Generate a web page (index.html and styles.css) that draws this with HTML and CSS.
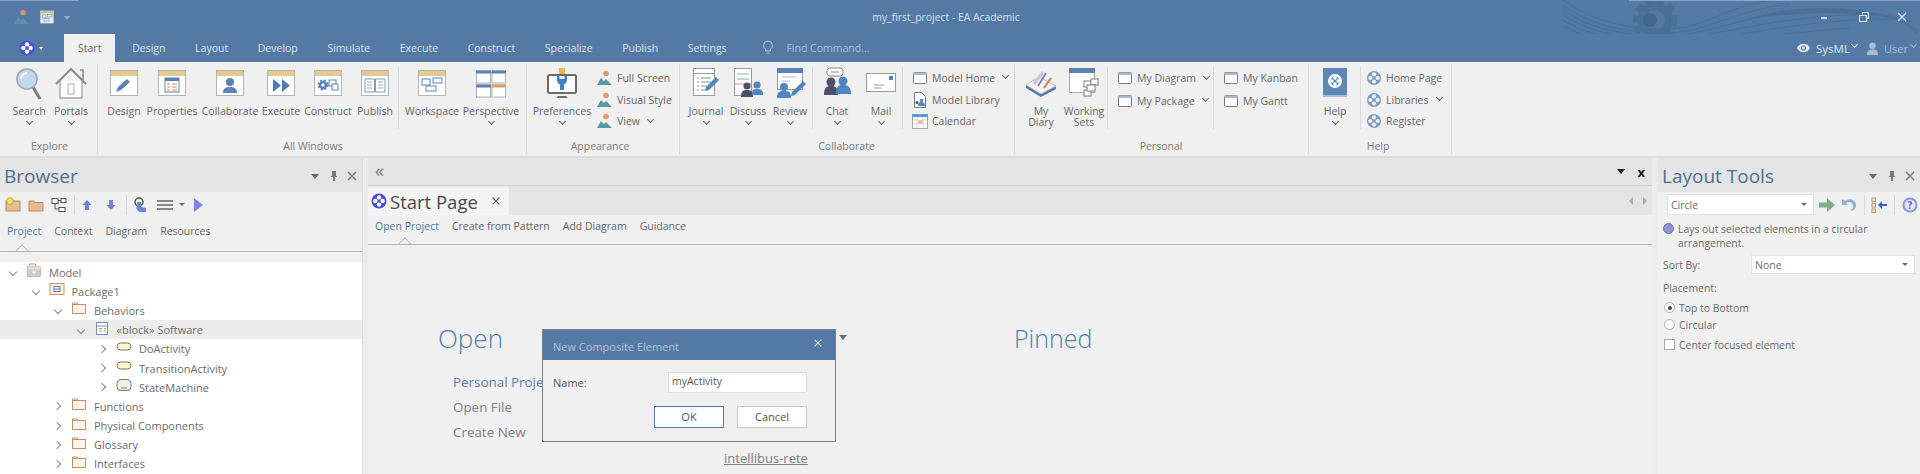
FILE: index.html
```html
<!DOCTYPE html>
<html>
<head>
  <meta name="viewport" content="width=device-width, initial-scale=1.0">
  <title>my_first_project - EA Academic</title>
  <link rel="stylesheet" href="styles.css">
</head>
<body>
  <svg class="sprite">
    <defs>
      <g id="win"><rect x="2.5" y="3.5" width="27" height="25" fill="#fff" stroke="#b4b4b4"/><rect x="3" y="4" width="26" height="5" fill="#e6c98f"/></g>
      <clipPath id="gear-clip"><path d="M60 0h70v24C110 30 85 30 60 24z"/></clipPath>
    </defs>
    <symbol id="i-logo" viewBox="0 0 16 16"><circle cx="8" cy="8" r="7.5" fill="#4b50d2"/><circle cx="8" cy="4.4" r="2.2" fill="#fff"/><circle cx="8" cy="11.6" r="2.2" fill="#fff"/><circle cx="4.4" cy="8" r="2.2" fill="#fff"/><circle cx="11.6" cy="8" r="2.2" fill="#fff"/><circle cx="8" cy="8" r="1.3" fill="#4b50d2"/></symbol>
    <symbol id="i-logo-g" viewBox="0 0 16 16"><circle cx="8" cy="8" r="7" fill="#7f9dbc"/><circle cx="8" cy="4.4" r="2.1" fill="#eef2f6"/><circle cx="8" cy="11.6" r="2.1" fill="#eef2f6"/><circle cx="4.4" cy="8" r="2.1" fill="#eef2f6"/><circle cx="11.6" cy="8" r="2.1" fill="#eef2f6"/><circle cx="8" cy="8" r="1.2" fill="#7f9dbc"/></symbol>
    <symbol id="i-search" viewBox="0 0 32 32"><path d="M20 20l7 12" stroke="#7d7d7d" stroke-width="3" stroke-linecap="round"/><circle cx="14" cy="12" r="10" fill="#c3d8ec" stroke="#a2a9b0" stroke-width="1.6"/><path d="M8 12a6 6 0 0 1 6-6" stroke="#fff" stroke-width="2" fill="none"/></symbol>
    <symbol id="i-home" viewBox="0 0 32 32"><path d="M5 14v17h22V14" fill="#fff" stroke="#a8a8a8" stroke-width="1.4"/><path d="M1 17L16 2l15 15" fill="none" stroke="#8c8c8c" stroke-width="2"/><path d="M25 3h3v10" fill="none" stroke="#8c8c8c" stroke-width="1.6"/><rect x="13" y="17" width="6" height="10" fill="#fff" stroke="#a8a8a8"/></symbol>
    <symbol id="i-w-design" viewBox="0 0 32 32"><use href="#win"/><path d="M8 25l2-5 9-8 3 3-9 8z" fill="#5a82b4"/></symbol>
    <symbol id="i-w-props" viewBox="0 0 32 32"><use href="#win"/><rect x="9" y="11" width="14" height="14" fill="#fff" stroke="#5a82b4"/><rect x="9" y="11" width="14" height="3" fill="#5a82b4"/><path d="M11 17h3M16 17h5M11 20h3M16 20h5M11 23h3M16 23h5" stroke="#d58a6a"/></symbol>
    <symbol id="i-w-collab" viewBox="0 0 32 32"><use href="#win"/><circle cx="16" cy="15" r="4" fill="#5a82b4"/><path d="M9 26c0-5 3-6 7-6s7 1 7 6z" fill="#5a82b4"/></symbol>
    <symbol id="i-w-exec" viewBox="0 0 32 32"><use href="#win"/><path d="M8 12l8 6.5-8 6.5zM17 12l8 6.5-8 6.5z" fill="#4f7cb2"/></symbol>
    <symbol id="i-w-cons" viewBox="0 0 32 32"><use href="#win"/><circle cx="11" cy="18" r="3" fill="#fff" stroke="#5a82b4" stroke-width="2.6"/><circle cx="11" cy="18" r="4.800" fill="none" stroke="#5a82b4" stroke-width="1.600" stroke-dasharray="2 1.800"/><rect x="17" y="13" width="7" height="6" fill="#fff" stroke="#5a82b4"/><rect x="20" y="17" width="6" height="6" fill="#fff" stroke="#5a82b4"/></symbol>
    <symbol id="i-w-pub" viewBox="0 0 32 32"><use href="#win"/><path d="M6 12h9.500v13H6zM16.500 12H26v13h-9.500z" fill="#fff" stroke="#7f9dbc"/><path d="M8 15h5M8 18h5M8 21h5M19 15h5M19 18h5M19 21h5" stroke="#9ab"/></symbol>
    <symbol id="i-w-space" viewBox="0 0 32 32"><use href="#win"/><g fill="#fff" stroke="#5a82b4"><rect x="6" y="12" width="8" height="6"/><rect x="17" y="11" width="9" height="5"/><rect x="10" y="19" width="10" height="5"/></g></symbol>
    <symbol id="i-persp" viewBox="0 0 32 32"><g fill="#fff" stroke="#b0b0b0"><rect x="1.500" y="4" width="14" height="12"/><rect x="17" y="4" width="13.500" height="12"/><rect x="1.500" y="18" width="14" height="12"/><rect x="17" y="18" width="13.500" height="12"/></g><rect x="1" y="3.500" width="15" height="3" fill="#5a82b4"/><rect x="16.500" y="3.500" width="14.500" height="3" fill="#5a82b4"/><rect x="1" y="17.500" width="15" height="3" fill="#5a82b4"/><rect x="16.500" y="17.500" width="14.500" height="3" fill="#d8a070"/></symbol>
    <symbol id="i-prefs" viewBox="0 0 32 32"><rect x="2" y="8" width="28" height="18" rx="1.500" fill="#fff" stroke="#6b6b6b" stroke-width="2"/><path d="M12 29h8l1.500 2h-11z" fill="#6b6b6b"/><path d="M13 1h6v6h-6z" fill="#e6b84f"/><path d="M11 8v5a5 5 0 0 0 3 4.500V23h4v-5.500a5 5 0 0 0 3-4.500V8l-2.500 0v4h-5V8z" fill="#3f7fc2"/></symbol>
    <symbol id="i-mini" viewBox="0 0 16 16"><circle cx="9" cy="3.500" r="2.800" fill="#e49a65"/><path d="M0 15l4-7 3 3 2-2 6 6z" fill="#5c97a6"/></symbol>
    <symbol id="i-journal" viewBox="0 0 32 32"><rect x="3.500" y="1.500" width="21" height="27" fill="#fff" stroke="#9a9a9a"/><path d="M4 6.500h20" stroke="#9a9a9a"/><path d="M7 11h2M11 11h10M7 15h2M11 15h10M7 19h2M11 19h6M7 23h2M11 23h4" stroke="#7c9c88"/><path d="M15 24l1-4 10-10 3 3-10 10z" fill="#4f86c0"/></symbol>
    <symbol id="i-discuss" viewBox="0 0 32 32"><rect x="2.500" y="1.500" width="17" height="27" fill="#fff" stroke="#9a9a9a"/><path d="M5 7h12M5 12h12" stroke="#79b7b7"/><path d="M3 17h16" stroke="#d8a0a0"/><circle cx="15" cy="19" r="3.600" fill="#4f4f68"/><path d="M9 30c0-6 2-7 6-7s6 1 6 7z" fill="#4f4f68"/><circle cx="25" cy="18" r="3.600" fill="#4f86c0"/><path d="M20 28c0-5 1-6 5-6s6 1 6 6z" fill="#4f86c0"/></symbol>
    <symbol id="i-review" viewBox="0 0 32 32"><rect x="3.500" y="2.500" width="25" height="20" fill="#fff" stroke="#9a9a9a"/><rect x="3" y="1" width="26" height="5" fill="#5a82b4"/><path d="M8 10h14M8 14h8" stroke="#b9b9b9"/><circle cx="10" cy="20" r="4" fill="#4f86c0"/><path d="M3 31c0-6 2-7 7-7s7 1 7 7z" fill="#4f86c0"/><path d="M17 29l1-4 11-11 3 3-11 11z" fill="#4f86c0"/></symbol>
    <symbol id="i-chat" viewBox="0 0 32 32"><rect x="6" y="1" width="16" height="8" rx="3" fill="#fff" stroke="#888"/><path d="M10 5h8" stroke="#888"/><circle cx="10" cy="15" r="4.500" fill="#4f4f68"/><path d="M3 28c0-8 3-9 7-9s7 1 7 9z" fill="#4f4f68"/><circle cx="22" cy="14" r="4.500" fill="#4f86c0"/><path d="M15 27c0-8 3-9 7-9s8 1 8 9z" fill="#4f86c0"/></symbol>
    <symbol id="i-mail" viewBox="0 0 32 32"><rect x="1.500" y="6.500" width="29" height="18" fill="#fff" stroke="#999"/><rect x="24" y="9" width="4" height="4" fill="#4f86c0"/><path d="M9 18h10M9 21h7" stroke="#999"/></symbol>
    <symbol id="i-swin" viewBox="0 0 16 16"><rect x="1.500" y="2.500" width="13" height="11" rx="1" fill="#fff" stroke="#7a7a7a"/><rect x="1.500" y="2.500" width="13" height="2.500" fill="#a9bdd2"/></symbol>
    <symbol id="i-lib" viewBox="0 0 16 16"><path d="M2.500.500h7l4 4v11h-11z" fill="#fff" stroke="#7a7a7a"/><circle cx="9.500" cy="8.500" r="1.800" fill="#4f86c0"/><path d="M6 14c0-3 1-4 3.500-4s3.500 1 3.500 4z" fill="#4f86c0"/><circle cx="5" cy="10.500" r="1.500" fill="#4f4f68"/></symbol>
    <symbol id="i-cal" viewBox="0 0 16 16"><rect x=".500" y="1.500" width="15" height="14" fill="#fff" stroke="#aaa"/><rect x="0" y="1" width="16" height="3" fill="#5b9bd5"/><rect x="6" y="7" width="5" height="4" fill="#f0bd80"/><path d="M1 7h14M1 11h14M5 4v11M11 4v11" stroke="#ddd"/></symbol>
    <symbol id="i-diary" viewBox="0 0 32 32"><path d="M1 18v3l15 9 15-8v-3l-15 8z" fill="#4f78a8"/><path d="M1 18L14 10l17 9-15 8z" fill="#f4f4f4" stroke="#a9a9a9" stroke-width=".8"/><path d="M9 17L18 5" stroke="#c9c9d9" stroke-width="3"/><path d="M13 19l8-13" stroke="#8e78c0" stroke-width="1.800"/><path d="M19 21l7-10" stroke="#d67a4a" stroke-width="2"/></symbol>
    <symbol id="i-sets" viewBox="0 0 32 32"><rect x="1.500" y="1.500" width="25" height="24" fill="#fff" stroke="#aaa"/><rect x="1" y="1" width="26" height="5" fill="#5a82b4"/><g fill="#fff" stroke="#7a7a7a"><rect x="16" y="14" width="7" height="6"/><rect x="23" y="12" width="7" height="6"/><rect x="16" y="23" width="7" height="6"/><rect x="19" y="18" width="8" height="6"/></g></symbol>
    <symbol id="i-book" viewBox="0 0 32 32"><rect x="4" y="1" width="24" height="29" fill="#5d87b8"/><rect x="4" y="28" width="24" height="2" fill="#a5bdd6"/><circle cx="16" cy="14" r="7" fill="#fff"/><circle cx="16" cy="14" r="4.500" fill="#5d87b8"/><circle cx="16" cy="11" r="1.700" fill="#fff"/><circle cx="16" cy="17" r="1.700" fill="#fff"/><circle cx="13" cy="14" r="1.700" fill="#fff"/><circle cx="19" cy="14" r="1.700" fill="#fff"/></symbol>
    <symbol id="i-pin" viewBox="0 0 12 12"><path d="M4 1h4v5h1v1H7v4H5V7H3V6h1z" fill="#7b7b7b"/></symbol>
    <symbol id="i-x" viewBox="0 0 12 12"><path d="M2 2l8 8M10 2l-8 8" stroke="currentColor" stroke-width="1.400"/></symbol>
    <symbol id="i-folder" viewBox="0 0 16 16"><path d="M1.500 3.500V2h5v1.500" fill="none" stroke="#c98f63"/><rect x="1.500" y="3.500" width="13" height="9" fill="#fff4e8" stroke="#c98f63"/></symbol>
    <symbol id="i-model" viewBox="0 0 16 16"><path d="M3.500 3V1h6v2" fill="none" stroke="#c98f63"/><rect x="1.500" y="3.500" width="13" height="10" fill="#bcd2e8" stroke="#c98f63" stroke-width=".6"/><rect x="1.500" y="3.500" width="13" height="3" fill="#f2dcc0"/><rect x="6.500" y="8" width="3" height="2" fill="#fff"/></symbol>
    <symbol id="i-pkg" viewBox="0 0 16 16"><rect x="1" y="1.500" width="14" height="11" fill="#fdf5ec" stroke="#c98f63"/><rect x="5" y="4.500" width="6" height="5" fill="#fff" stroke="#4f7cb2"/><path d="M5 7h6" stroke="#4f7cb2"/></symbol>
    <symbol id="i-block" viewBox="0 0 16 16"><rect x="2.500" y="1.500" width="11" height="12" fill="#fff" stroke="#7a8cc6"/><path d="M3 5h10" stroke="#7a8cc6"/><path d="M5 7.500h3M10 7.500h2M5 10h3M10 10h2" stroke="#d58a6a"/></symbol>
    <symbol id="i-act" viewBox="0 0 16 16"><rect x="1" y="3" width="14" height="7" rx="3.500" fill="#fff5c8" stroke="#777"/></symbol>
    <symbol id="i-state" viewBox="0 0 16 16"><rect x="1" y="1.500" width="14" height="11" rx="4" fill="#eef3e6" stroke="#777"/><path d="M5 10h6" stroke="#777"/></symbol>
  </svg>

  <div class="app">
    <div class="titlebar">
      <svg class="wave" viewBox="0 0 360 62">
        <g clip-path="url(#gear-clip)">
          <circle cx="95" cy="20" r="14" fill="none" stroke="#4a6f99" stroke-width="8"/>
          <circle cx="95" cy="20" r="20" fill="none" stroke="#4a6f99" stroke-width="5" stroke-dasharray="7 5"/>
          <circle cx="90" cy="20" r="7" fill="#436790"/>
        </g>
        <g fill="none" stroke="#4a6f99" stroke-width="1">
          <path d="M3 0C30 20 65 29 105 29S170 4 215 0"/>
          <path d="M3 5C30 25 65 33 105 33S175 10 230 4"/>
          <path d="M3 10C30 29 65 36 105 36S180 16 250 9"/>
          <path d="M3 15C30 33 65 39 105 39S190 22 270 16s70 8 87 14"/>
          <path d="M3 20C30 37 65 42 105 43S195 28 280 21s60 6 78 12"/>
          <path d="M4 26C30 41 65 46 110 46S200 34 290 28"/>
        </g>
        <path d="M190 18C230 6 290 2 357 23C300 10 250 12 190 18z" fill="#4a6f99"/>
        <rect x="69" y="0" width="291" height="1" fill="#8fa7c2"/>
      </svg>
      <div class="qat">
        <svg class="ic16"><use href="#i-mini"/></svg>
        <svg class="ic16"><use href="#i-w-space"/></svg>
        <span class="qat-drop"></span>
      </div>
      <div class="app-title">my_first_project - EA Academic</div>
      <div class="win-btns">
        <span class="win-min"></span>
        <svg class="win-rest" viewBox="0 0 10 10"><path d="M3.500 2.500V.5h6v6h-2M.5 3.500h7v6h-7z" fill="none" stroke="#d9e2ec" stroke-width="1.200"/></svg>
        <svg class="win-close"><use href="#i-x"/></svg>
      </div>
    </div>

    <div class="tabbar">
      <div class="app-menu"><svg class="ic16"><use href="#i-logo"/></svg><span class="drop-w"></span></div>
      <div class="tab active">Start</div>
      <div class="tab">Design</div>
      <div class="tab">Layout</div>
      <div class="tab">Develop</div>
      <div class="tab">Simulate</div>
      <div class="tab">Execute</div>
      <div class="tab">Construct</div>
      <div class="tab">Specialize</div>
      <div class="tab">Publish</div>
      <div class="tab">Settings</div>
      <svg class="bulb" viewBox="0 0 12 16"><path d="M6 1a4.500 4.500 0 0 0-2.500 8.200V11h5V9.200A4.500 4.500 0 0 0 6 1zM4.500 13h3" fill="none" stroke="#b7c7d9"/></svg>
      <div class="find">Find Command...</div>
      <div class="tab-right">
        <svg class="eye" viewBox="0 0 14 10"><path d="M0 5c3-6 11-6 14 0-3 6-11 6-14 0z" fill="#e8eef4"/><circle cx="7" cy="5" r="2.800" fill="#5579a5"/><circle cx="7" cy="5" r="1.500" fill="#e8eef4"/></svg>
        <span class="view-name">SysML</span><i class="chev-w"></i>
        <svg class="user-ic" viewBox="0 0 12 14"><circle cx="6" cy="4" r="3.500" fill="#a9bcd2"/><path d="M0 14c0-5 2-6 6-6s6 1 6 6z" fill="#a9bcd2"/></svg>
        <span class="user-name">User</span><i class="chev-w dim"></i>
      </div>
    </div>

    <div class="ribbon">
      <div class="grp g-explore">
        <div class="grp-body">
          <div class="big w42"><svg class="ic32"><use href="#i-search"/></svg><span>Search</span><i class="chev"></i></div>
          <div class="big w42"><svg class="ic32"><use href="#i-home"/></svg><span>Portals</span><i class="chev"></i></div>
        </div>
        <div class="grp-label">Explore</div>
      </div>
      <div class="grp g-windows">
        <div class="grp-body">
          <div class="big w48"><svg class="ic32"><use href="#i-w-design"/></svg><span>Design</span></div>
          <div class="big w48"><svg class="ic32"><use href="#i-w-props"/></svg><span>Properties</span></div>
          <div class="big w68"><svg class="ic32"><use href="#i-w-collab"/></svg><span>Collaborate</span></div>
          <div class="big w34"><svg class="ic32"><use href="#i-w-exec"/></svg><span>Execute</span></div>
          <div class="big w60"><svg class="ic32"><use href="#i-w-cons"/></svg><span>Construct</span></div>
          <div class="big w34"><svg class="ic32"><use href="#i-w-pub"/></svg><span>Publish</span></div>
          <div class="sep s6"></div>
          <div class="big w66"><svg class="ic32"><use href="#i-w-space"/></svg><span>Workspace</span></div>
          <div class="big w52"><svg class="ic32"><use href="#i-persp"/></svg><span>Perspective</span><i class="chev"></i></div>
        </div>
        <div class="grp-label">All Windows</div>
      </div>
      <div class="grp g-appear">
        <div class="grp-body">
          <div class="big w70"><svg class="ic32"><use href="#i-prefs"/></svg><span>Preferences</span><i class="chev"></i></div>
          <div class="small-col c-appear">
            <div class="small"><svg class="ic16"><use href="#i-mini"/></svg>Full Screen</div>
            <div class="small"><svg class="ic16"><use href="#i-mini"/></svg>Visual Style</div>
            <div class="small"><svg class="ic16"><use href="#i-mini"/></svg>View<i class="chev-s"></i></div>
          </div>
        </div>
        <div class="grp-label">Appearance</div>
      </div>
      <div class="grp g-collab">
        <div class="grp-body">
          <div class="big w42"><svg class="ic32"><use href="#i-journal"/></svg><span>Journal</span><i class="chev"></i></div>
          <div class="big w42"><svg class="ic32"><use href="#i-discuss"/></svg><span>Discuss</span><i class="chev"></i></div>
          <div class="big w42"><svg class="ic32"><use href="#i-review"/></svg><span>Review</span><i class="chev"></i></div>
          <div class="sep"></div>
          <div class="big w48"><svg class="ic32"><use href="#i-chat"/></svg><span>Chat</span><i class="chev"></i></div>
          <div class="big w40"><svg class="ic32"><use href="#i-mail"/></svg><span>Mail</span><i class="chev"></i></div>
          <div class="sep"></div>
          <div class="small-col">
            <div class="small"><svg class="ic16"><use href="#i-swin"/></svg>Model Home<i class="chev-s"></i></div>
            <div class="small"><svg class="ic16"><use href="#i-lib"/></svg>Model Library</div>
            <div class="small"><svg class="ic16"><use href="#i-cal"/></svg>Calendar</div>
          </div>
        </div>
        <div class="grp-label">Collaborate</div>
      </div>
      <div class="grp g-personal">
        <div class="grp-body">
          <div class="big w42 tight"><svg class="ic32"><use href="#i-diary"/></svg><span>My<br>Diary</span></div>
          <div class="big w44 tight"><svg class="ic32"><use href="#i-sets"/></svg><span>Working<br>Sets</span></div>
          <div class="sep"></div>
          <div class="small-col c-mydiag">
            <div class="small"><svg class="ic16"><use href="#i-swin"/></svg>My Diagram<i class="chev-s"></i></div>
            <div class="small"><svg class="ic16"><use href="#i-swin"/></svg>My Package<i class="chev-s"></i></div>
          </div>
          <div class="sep"></div>
          <div class="small-col">
            <div class="small"><svg class="ic16"><use href="#i-swin"/></svg>My Kanban</div>
            <div class="small"><svg class="ic16"><use href="#i-swin"/></svg>My Gantt</div>
          </div>
        </div>
        <div class="grp-label">Personal</div>
      </div>
      <div class="grp g-help">
        <div class="grp-body">
          <div class="big w48"><svg class="ic32"><use href="#i-book"/></svg><span>Help</span><i class="chev"></i></div>
          <div class="sep"></div>
          <div class="small-col c-help">
            <div class="small"><svg class="ic16"><use href="#i-logo-g"/></svg>Home Page</div>
            <div class="small"><svg class="ic16"><use href="#i-logo-g"/></svg>Libraries<i class="chev-s"></i></div>
            <div class="small"><svg class="ic16"><use href="#i-logo-g"/></svg>Register</div>
          </div>
        </div>
        <div class="grp-label">Help</div>
      </div>
    </div>

    <div class="workspace">
      <div class="panel browser">
        <div class="panel-head">
          <span class="panel-title">Browser</span>
          <span class="head-btns"><i class="tri"></i><svg class="ic12"><use href="#i-pin"/></svg><svg class="ic12 grey"><use href="#i-x"/></svg></span>
        </div>
        <div class="toolbar">
          <svg class="ic16" viewBox="0 0 16 16"><rect x="1" y="4" width="14" height="10" fill="#e6bd92" stroke="#b98a5c"/><circle cx="5" cy="4" r="3.400" fill="#f4e06a" stroke="#9c8a2c" stroke-width=".6"/></svg>
          <svg class="ic16" viewBox="0 0 16 16"><path d="M1 4h5l1 1.500h8V14H1z" fill="#e6bd92" stroke="#b98a5c"/></svg>
          <svg class="ic16" viewBox="0 0 16 16"><g fill="#fff" stroke="#555"><rect x="1" y="1.500" width="6" height="5"/><rect x="10" y="1.500" width="5" height="4"/><rect x="8" y="10.500" width="6" height="4"/></g><path d="M4 7v5h4M7 3.500h3" stroke="#555" fill="none"/></svg>
          <span class="tb-sep"></span>
          <svg class="ic16 gap-a" viewBox="0 0 16 16"><path d="M8 3l4.500 5H10v5H6V8H3.500z" fill="#6f82d8"/></svg>
          <svg class="ic16 gap-b" viewBox="0 0 16 16"><path d="M8 13l4.500-5H10V3H6v5H3.500z" fill="#6f82d8"/></svg>
          <span class="tb-sep"></span>
          <svg class="ic16 gap-c" viewBox="0 0 16 16"><circle cx="7" cy="5" r="4" fill="none" stroke="#555" stroke-width="1.500"/><path d="M5 5h4v5l5 1v4H7l-3-4 1-1z" fill="#6f82d8"/></svg>
          <svg class="ic16 gap-d" viewBox="0 0 16 16"><path d="M0 4h16M0 8h16M0 12h16" stroke="#666" stroke-width="1.500"/></svg>
          <i class="tri small-tri"></i>
          <svg class="ic16 gap-e" viewBox="0 0 16 16"><path d="M3 1l9 7-9 7z" fill="#7c86de"/></svg>
        </div>
        <div class="subtabs b-tabs">
          <span class="on">Project</span><span>Context</span><span>Diagram</span><span>Resources</span>
          <i class="notch n-browser"></i>
        </div>
        <div class="tree">
          <div class="row l0"><i class="tw down"></i><svg class="ic16"><use href="#i-model"/></svg>Model</div>
          <div class="row l1"><i class="tw down"></i><svg class="ic16"><use href="#i-pkg"/></svg>Package1</div>
          <div class="row l2"><i class="tw down"></i><svg class="ic16"><use href="#i-folder"/></svg>Behaviors</div>
          <div class="row l3 sel"><i class="tw down"></i><svg class="ic16"><use href="#i-block"/></svg>«block» Software</div>
          <div class="row l4"><i class="tw"></i><svg class="ic16"><use href="#i-act"/></svg>DoActivity</div>
          <div class="row l4"><i class="tw"></i><svg class="ic16"><use href="#i-act"/></svg>TransitionActivity</div>
          <div class="row l4"><i class="tw"></i><svg class="ic16"><use href="#i-state"/></svg>StateMachine</div>
          <div class="row l2"><i class="tw"></i><svg class="ic16"><use href="#i-folder"/></svg>Functions</div>
          <div class="row l2"><i class="tw"></i><svg class="ic16"><use href="#i-folder"/></svg>Physical Components</div>
          <div class="row l2"><i class="tw"></i><svg class="ic16"><use href="#i-folder"/></svg>Glossary</div>
          <div class="row l2"><i class="tw"></i><svg class="ic16"><use href="#i-folder"/></svg>Interfaces</div>
        </div>
      </div>

      <div class="panel doc">
        <div class="doc-top">
          <span class="dbl">«</span>
          <span class="doc-btns"><i class="tri dark"></i><b>x</b></span>
        </div>
        <div class="doc-tabs">
          <div class="doc-tab"><svg class="ic16"><use href="#i-logo"/></svg><span>Start Page</span><svg class="ic12 dk"><use href="#i-x"/></svg></div>
          <span class="nav-arrows"><i class="na left"></i><i class="na right"></i></span>
        </div>
        <div class="subtabs d-tabs">
          <span class="on">Open Project</span><span>Create from Pattern</span><span>Add Diagram</span><span>Guidance</span>
          <i class="notch n-doc"></i>
        </div>
        <div class="doc-body">
          <div class="col">
            <h2>Open</h2>
            <ul class="links">
              <li class="blue">Personal Proje</li>
              <li>Open File</li>
              <li>Create New</li>
            </ul>
          </div>
          <div class="col col-mid">
            <i class="tri recent-drop"></i>
            <a class="recent-link">intellibus-rete</a>
          </div>
          <div class="col">
            <h2 class="narrow">Pinned</h2>
          </div>
        </div>

        <div class="dialog">
          <div class="dlg-head"><span>New Composite Element</span><svg class="ic12"><use href="#i-x"/></svg></div>
          <div class="dlg-row"><label>Name:</label><div class="dlg-input">myActivity</div></div>
          <div class="dlg-btns"><div class="btn default">OK</div><div class="btn">Cancel</div></div>
        </div>
      </div>

      <div class="panel tools">
        <div class="panel-head">
          <span class="panel-title">Layout Tools</span>
          <span class="head-btns"><i class="tri"></i><svg class="ic12"><use href="#i-pin"/></svg><svg class="ic12 grey"><use href="#i-x"/></svg></span>
        </div>
        <div class="toolbar t-bar">
          <div class="select s-layout">Circle<i class="tri small-tri"></i></div>
          <svg class="ic16 t-go" viewBox="0 0 16 16"><path d="M0 5.500h8V1l8 7-8 7v-4.500H0z" fill="#7fb08c"/></svg>
          <svg class="ic16 t-undo" viewBox="0 0 16 16"><path d="M1 2v6h6L5 6c3-2 7-1 7 3 0 2-1 4-3 5 4 0 6-3 6-6 0-5-6-8-11-4z" fill="#8fb0dc"/></svg>
          <span class="tb-sep"></span>
          <svg class="ic16 t-align" viewBox="0 0 16 16"><g fill="#fff" stroke="#b98a5c"><rect x="1" y="1" width="3.500" height="3.500"/><rect x="1" y="6.500" width="3.500" height="3.500"/><rect x="1" y="12" width="3.500" height="3.500"/></g><path d="M16 7v2h-5v3L7 8l4-4v3z" fill="#3f5fc0"/></svg>
          <span class="tb-sep"></span>
          <svg class="ic16 t-help" viewBox="0 0 16 16"><circle cx="8" cy="8" r="7.500" fill="#8c93dc"/><circle cx="8" cy="8" r="5.500" fill="#e6e8f8"/><text x="8" y="11.500" text-anchor="middle" font-size="10" font-weight="700" font-family="Open Sans" fill="#5860c0">?</text></svg>
        </div>
        <div class="tool-body">
          <div class="desc"><i class="dot"></i><span>Lays out selected elements in a circular arrangement.</span></div>
          <div class="field"><label>Sort By:</label><div class="select s-sort">None<i class="tri small-tri"></i></div></div>
          <div class="place">Placement:</div>
          <div class="opt first"><i class="radio checked"></i>Top to Bottom</div>
          <div class="opt"><i class="radio"></i>Circular</div>
          <div class="opt chk"><i class="check"></i>Center focused element</div>
        </div>
      </div>
    </div>
  </div>
</body>
</html>
```

FILE: styles.css
```css
* {
  box-sizing: border-box;
}

html, body {
  margin: 0;
  padding: 0;
  height: 100%;
  overflow: hidden;
}

body {
  font-family: "Open Sans", "Noto Sans", sans-serif;
  font-size: 10.5px;
  color: #666666;
  background-color: #f0f0f0;
}

.sprite {
  display: none;
}

.ic12 { width: 12px; height: 12px; flex: none; }
.ic16 { width: 16px; height: 16px; flex: none; }
.ic32 { width: 32px; height: 32px; flex: none; }

.app {
  display: flex;
  flex-direction: column;
  height: 474px;
  width: 1920px;
}

/* title bar */
.titlebar {
  position: relative;
  height: 34px;
  background-color: #5579a5;
  display: flex;
  align-items: center;
  padding-left: 14px;
}

.titlebar::before {
  content: "";
  position: absolute;
  left: 0;
  top: 0;
  width: 78px;
  height: 1px;
  background-color: #8fa7c2;
}

.wave {
  position: absolute;
  left: 1560px;
  top: 0;
  width: 360px;
  height: 62px;
  overflow: visible;
}

.qat {
  display: flex;
  align-items: center;
  gap: 9px;
  width: 852px;
  opacity: 0.85;
}

.qat-drop {
  width: 0;
  height: 0;
  border: 3px solid transparent;
  border-top: 4px solid #9fb3c9;
  margin-top: 4px;
}

.app-title {
  font-size: 10.4px;
  color: #d9e2ec;
  width: 160px;
  text-align: center;
  position: relative;
}

.win-btns {
  position: absolute;
  right: 12px;
  top: 11px;
  display: flex;
  align-items: center;
}

.win-min {
  width: 6px;
  height: 2px;
  background-color: #d9e2ec;
  margin-right: 32px;
  margin-top: 2px;
}

.win-rest {
  width: 10px;
  height: 10px;
  margin-right: 27px;
}

.win-close {
  width: 12px;
  height: 12px;
  color: #d9e2ec;
}

/* ribbon tabs */
.tabbar {
  height: 28px;
  background-color: #5579a5;
  display: flex;
  align-items: center;
  position: relative;
}

.app-menu {
  width: 64px;
  padding-left: 19px;
  display: flex;
  align-items: center;
  gap: 4px;
}

.drop-w {
  width: 0;
  height: 0;
  border: 2.5px solid transparent;
  border-top: 3px solid #ffffff;
  margin-top: 2px;
}

.tab {
  height: 28px;
  line-height: 28px;
  padding: 0 14.8px;
  color: #dde5ee;
  font-size: 10.5px;
  white-space: nowrap;
}

.tab.active {
  background-color: #f0f0f0;
  color: #666666;
  padding: 0 14px;
  margin-right: 2px;
}

.bulb {
  width: 12px;
  height: 16px;
  margin-left: 21px;
}

.find {
  margin-left: 12px;
  color: #aebfd3;
  font-size: 10.5px;
}

.tab-right {
  position: absolute;
  right: 0;
  top: 0;
  left: 1797px;
  height: 28px;
  display: flex;
  align-items: center;
  color: #dde5ee;
  font-size: 11.5px;
}

.eye {
  width: 13px;
  height: 10px;
  margin-right: 6px;
}

.view-name {
  width: 34px;
}

.user-ic {
  width: 11px;
  height: 13px;
  margin-left: 10px;
  margin-right: 6px;
}

.user-name {
  width: 25px;
  color: #a9bcd2;
  font-size: 11px;
}

.chev-w {
  width: 5px;
  height: 5px;
  border-right: 1px solid #e8eef4;
  border-bottom: 1px solid #e8eef4;
  transform: rotate(45deg);
  margin-top: -8px;
  margin-left: 2px;
}

.chev-w.dim {
  border-color: #a9bcd2;
}

/* ribbon */
.ribbon {
  height: 96px;
  background-color: #f0f0f0;
  border-bottom: 2px solid #dcdcdc;
  display: flex;
}

.grp {
  display: flex;
  flex-direction: column;
  border-right: 1px solid #dadada;
  margin: 2px 0 2px;
  flex: none;
}

.g-explore  { width: 98px; padding-left: 8px; }
.g-windows  { width: 429px; padding-left: 2px; }
.g-appear   { width: 153px; }
.g-collab   { width: 335px; padding-left: 5px; }
.g-personal { width: 294px; padding-left: 5px; }
.g-help     { width: 143px; padding-left: 2px; }

.grp-body {
  display: flex;
  height: 68px;
  flex: none;
}

.grp-label {
  text-align: center;
  height: 22px;
  line-height: 20px;
  color: #7b7b7b;
  padding-top: 3.5px;
  margin-left: -6px;
}

.g-windows .grp-label { margin-left: 0; }

.big {
  display: flex;
  flex-direction: column;
  align-items: center;
  white-space: nowrap;
  flex: none;
  padding-top: 3px;
  line-height: 14px;
}

.big span {
  margin-top: 5px;
}

.big.tight span {
  line-height: 11.5px;
  text-align: center;
  margin-top: 6.5px;
}

.w34 { width: 34px; }
.w40 { width: 40px; }
.w42 { width: 42px; }
.w44 { width: 44px; }
.w48 { width: 48px; }
.w52 { width: 52px; }
.w60 { width: 60px; }
.w66 { width: 66px; }
.w68 { width: 68px; }
.w70 { width: 70px; }

.chev {
  width: 5px;
  height: 5px;
  border-right: 1px solid #666666;
  border-bottom: 1px solid #666666;
  transform: rotate(45deg);
  margin-top: 1px;
}

.chev-s {
  width: 5px;
  height: 5px;
  border-right: 1px solid #666666;
  border-bottom: 1px solid #666666;
  transform: rotate(45deg);
  margin-left: 4px;
  margin-top: -4px;
}

.sep {
  width: 1px;
  height: 62px;
  margin: 3px 0 0 1px;
  background-color: #dadada;
  flex: none;
}

.sep.s6 {
  margin-left: 6px;
}

.small-col {
  display: flex;
  flex-direction: column;
  padding: 3px 0 0 9px;
  white-space: nowrap;
}

.c-appear {
  padding-left: 0;
}

.c-help {
  padding-left: 5px;
}

.c-mydiag {
  width: 104px;
}

.small {
  display: flex;
  align-items: center;
  height: 22.4px;
  gap: 4px;
}

/* panels */
.workspace {
  flex: 1;
  min-height: 0;
  display: flex;
  background-color: #ececec;
  overflow: hidden;
}

.panel {
  display: flex;
  flex-direction: column;
  flex: none;
  position: relative;
}

.browser {
  width: 363px;
  background-color: #f0f0f0;
  margin-right: 5px;
  border-right: 1px solid #dddddd;
}

.doc {
  width: 1284px;
  background-color: #f0f0f0;
  margin-right: 6px;
}

.tools {
  width: 262px;
  background-color: #f0f0f0;
}

.panel-head {
  height: 34px;
  background-color: #e4e4e4;
  display: flex;
  align-items: center;
  justify-content: space-between;
  padding: 2px 4px 0;
}

.panel-title {
  font-size: 19px;
  color: #4f6f92;
}

.head-btns {
  display: flex;
  align-items: center;
  gap: 6px;
  color: #777777;
}

.head-btns .tri {
  margin-right: 3px;
}

.grey {
  color: #777777;
}

.tri {
  width: 0;
  height: 0;
  border: 4px solid transparent;
  border-top: 5px solid #6b6b6b;
  border-bottom: none;
  display: inline-block;
}

.tri.dark {
  border-top-color: #222222;
}

.small-tri {
  border-width: 3px;
  border-top-width: 3px;
  border-bottom: none;
}

.toolbar {
  height: 25px;
  display: flex;
  align-items: center;
  padding-left: 5px;
  gap: 7px;
  flex: none;
}

.tb-sep {
  width: 1px;
  height: 20px;
  background-color: #d6d6d6;
}

.gap-a { margin-left: -3px; }
.gap-b { margin-left: 1px; }
.gap-c { margin-left: -2px; }
.gap-d { margin-left: 2px; }
.small-tri { margin-left: -1px; }
.gap-e { margin-left: -1px; }

.subtabs {
  position: relative;
  display: flex;
  gap: 13px;
  border-bottom: 1px solid #b5b5b5;
  flex: none;
}

.subtabs .on {
  color: #4f7aa6;
}

.b-tabs {
  height: 35px;
  padding: 7px 0 0 7px;
}

.d-tabs {
  height: 30px;
  padding: 4px 0 0 7px;
}

.notch {
  position: absolute;
  bottom: -5px;
  width: 10px;
  height: 10px;
  background-color: #f0f0f0;
  border-top: 1px solid #b5b5b5;
  border-left: 1px solid #b5b5b5;
  transform: rotate(45deg);
  clip-path: polygon(0 0, 100% 0, 0 100%);
}

.n-browser { left: 17px; }
.n-doc { left: 32px; }

.tree {
  margin-top: 10px;
  flex: 1;
  background-color: #ffffff;
  font-size: 11px;
  color: #6b6b6b;
  padding-top: 0.5px;
}

.row {
  display: flex;
  align-items: center;
  height: 19.2px;
  white-space: nowrap;
}

.row svg {
  margin: -2px 7px 0 9px;
}

.l0 { padding-left: 9px; }
.l1 { padding-left: 31.5px; }
.l2 { padding-left: 54px; }
.l3 { padding-left: 76.5px; }
.l4 { padding-left: 99px; }

.sel {
  background-color: #ececec;
}

.tw {
  width: 8px;
  height: 8px;
  position: relative;
  flex: none;
}

.tw::after {
  content: "";
  position: absolute;
  left: 0;
  top: 1px;
  width: 5px;
  height: 5px;
  border-right: 1px solid #8a8a8a;
  border-bottom: 1px solid #8a8a8a;
  transform: rotate(-45deg);
}

.tw.down::after {
  left: 1px;
  transform: rotate(45deg);
}

/* document area */
.doc-top {
  height: 28px;
  background-color: #e4e4e4;
  border-bottom: 1px solid #d4d4d4;
  display: flex;
  align-items: center;
  justify-content: space-between;
  padding: 0 7px;
  flex: none;
}

.dbl {
  font-size: 18px;
  line-height: 20px;
  margin-top: -4px;
  color: #777777;
}

.doc-btns {
  display: flex;
  align-items: center;
  gap: 12px;
  font-size: 13px;
  color: #222222;
}

.doc-tabs {
  height: 29px;
  background-color: #e4e4e4;
  display: flex;
  align-items: flex-end;
  justify-content: space-between;
  flex: none;
}

.doc-tab {
  height: 28px;
  width: 141px;
  background-color: #f4f4f4;
  display: flex;
  align-items: center;
  padding-left: 3px;
  color: #555555;
  font-size: 20px;
}

.doc-tab span {
  margin-left: 3px;
  width: 101px;
  color: #4a4a4a;
  font-size: 18.5px;
}

.dk {
  color: #555555;
  width: 10px;
  height: 10px;
}

.nav-arrows {
  display: flex;
  gap: 10px;
  padding: 0 5px 10px 0;
}

.na {
  width: 0;
  height: 0;
  border: 4px solid transparent;
}

.na.left {
  border-right: 4px solid #aaaaaa;
  border-left: none;
}

.na.right {
  border-left: 4px solid #aaaaaa;
  border-right: none;
}

.doc-body {
  flex: 1;
  display: grid;
  grid-template-columns: 286px 290px 1fr;
  padding: 75px 0 0 70px;
}

.col {
  position: relative;
}

.col h2 {
  margin: 0;
  font-size: 26px;
  font-weight: 300;
  line-height: 36px;
  color: #4f7fae;
}

.col h2.narrow {
  font-size: 25px;
}

.links {
  list-style: none;
  margin: 14px 0 0 15px;
  padding: 0;
  font-size: 13.4px;
  color: #808080;
}

.links li {
  height: 25px;
  line-height: 25px;
  white-space: nowrap;
}

.links .blue {
  color: #5480ad;
}

.recent-drop {
  position: absolute;
  left: 115px;
  top: 15px;
}

.recent-link {
  display: block;
  margin-top: 129px;
  font-size: 13px;
  line-height: 18px;
  color: #808080;
  text-decoration: underline;
}

.dialog {
  position: absolute;
  left: 174px;
  top: 171px;
  width: 294px;
  height: 113px;
  background-color: #f0f0f0;
  border: 1px solid #76818d;
}

.dlg-head {
  height: 30px;
  background-color: #5579a5;
  color: #b4c6da;
  display: flex;
  align-items: flex-end;
  justify-content: space-between;
  padding: 0 12px 6px 10px;
  font-size: 11px;
  position: relative;
}

.dlg-head svg {
  color: #d9e2ec;
  margin-bottom: 6px;
  width: 10px;
  height: 10px;
}

.dlg-row {
  display: flex;
  align-items: center;
  padding: 12px 0 0 10px;
}

.dlg-row label {
  width: 115px;
  color: #555555;
  font-size: 11px;
}

.dlg-input {
  width: 139px;
  height: 21px;
  background-color: #ffffff;
  border: 1px solid #dddddd;
  padding-left: 3px;
  line-height: 17px;
  color: #555555;
  font-size: 10.5px;
}

.dlg-btns {
  display: flex;
  justify-content: flex-end;
  gap: 13px;
  padding: 13px 28px 0 0;
}

.btn {
  width: 70px;
  height: 22px;
  border: 1px solid #c8c8c8;
  background-color: #ffffff;
  text-align: center;
  line-height: 20px;
  font-size: 11px;
  color: #555555;
}

.btn.default {
  border: 1px solid #5579a5;
}

/* layout tools */
.t-bar {
  position: relative;
  padding-left: 9px;
  gap: 0;
}

.select {
  background-color: #ffffff;
  border: 1px solid #e0e0e0;
  display: flex;
  align-items: center;
  justify-content: space-between;
  padding: 0 6px 0 3px;
  font-size: 10.5px;
  color: #6b6b6b;
}

.s-layout {
  width: 147px;
  height: 21px;
}

.s-sort {
  width: 164px;
  height: 19px;
}

.t-go { margin-left: 5px; }
.t-undo { margin-left: 6px; }
.t-bar .tb-sep { margin-left: 7px; }
.t-align { margin-left: 6px; }
.t-help { margin-left: 7px; }

.tool-body {
  padding: 5px 0 0 5px;
  font-size: 10.4px;
  color: #6b6b6b;
}

.desc {
  display: flex;
  gap: 4px;
  line-height: 14px;
  width: 250px;
}

.dot {
  width: 11px;
  height: 11px;
  border-radius: 50%;
  background-color: #8c93cf;
  border: 1px solid #6b74b8;
  flex: none;
  margin-top: 1px;
}

.field {
  display: flex;
  align-items: center;
  margin-top: 5px;
}

.field label {
  width: 88px;
}

.place {
  margin-top: 7px;
  line-height: 15px;
}

.opt {
  display: flex;
  align-items: center;
  gap: 4px;
  height: 17px;
  padding-left: 1px;
}

.opt.first {
  margin-top: 3px;
}

.opt.chk {
  margin-top: 3px;
}

.radio {
  width: 11px;
  height: 11px;
  border-radius: 50%;
  background-color: #ffffff;
  border: 1px solid #b0b0b0;
  position: relative;
}

.radio.checked::after {
  content: "";
  position: absolute;
  left: 2.500px;
  top: 2.500px;
  width: 4px;
  height: 4px;
  border-radius: 50%;
  background-color: #444444;
}

.check {
  width: 11px;
  height: 11px;
  background-color: #ffffff;
  border: 1px solid #a8a8a8;
}
```
